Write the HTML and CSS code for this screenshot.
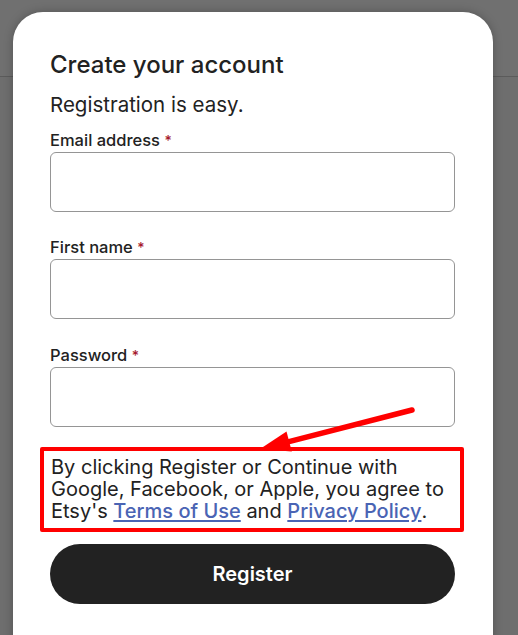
FILE: index.html
```html
<!DOCTYPE html>
<html lang="en">
<head>
<meta charset="utf-8">
<title>Create your account</title>
<link rel="stylesheet" href="styles.css">
</head>
<body>
<header class="site-header"></header>
<div class="modal">
  <h1 class="title">Create your account</h1>
  <p class="subtitle">Registration is easy.</p>
  <form class="form">
    <div class="group">
      <label class="label">Email address <span class="req">*</span></label>
      <input class="input" type="email">
    </div>
    <div class="group">
      <label class="label">First name <span class="req">*</span></label>
      <input class="input" type="text">
    </div>
    <div class="group">
      <label class="label">Password <span class="req">*</span></label>
      <input class="input" type="password">
    </div>
    <p class="legal">By clicking Register or Continue with Google, Facebook, or Apple, you agree to Etsy's <a href="#" class="link">Terms of Use</a> and <a href="#" class="link">Privacy Policy</a>.</p>
    <button type="button" class="btn">Register</button>
  </form>
</div>
<svg class="arrow" width="170" height="56" viewBox="0 0 170 56">
  <line x1="162" y1="10" x2="38" y2="41.8" stroke="#f00" stroke-width="5.5" stroke-linecap="round"/>
  <polygon points="10,49 36.5,31.5 41.8,51.5" fill="#f00"/>
</svg>
</body>
</html>
```
FILE: styles.css
```css
html, body {
  margin: 0;
  padding: 0;
}
body {
  background: #6e6e6e;
  height: 635px;
  overflow: hidden;
  position: relative;
  font-family: "Inter", "Liberation Sans", sans-serif;
  color: #222;
}
.site-header {
  height: 76px;
  border-bottom: 1px solid #5b5b5b;
  background: #707070;
}
.modal {
  position: absolute;
  left: 13px;
  top: 12px;
  width: 480px;
  height: 660px;
  background: #fff;
  border-radius: 30px;
  box-shadow: 0 0 10px rgba(0,0,0,0.25);
  box-sizing: border-box;
  padding: 39px 38px 0 37px;
}
.title {
  margin: 0;
  font-size: 24px;
  line-height: 28px;
  font-weight: 500;
  color: #222;
}
.subtitle {
  margin: 13px 0 0;
  font-size: 20.5px;
  line-height: 26px;
  font-weight: 400;
}
.form {
  margin-top: 11.5px;
  display: flex;
  flex-direction: column;
}
.group {
  display: flex;
  flex-direction: column;
  margin-bottom: 25.5px;
}
.group:nth-child(3) {
  margin-bottom: 20.5px;
}
.label {
  font-size: 16.5px;
  line-height: 20px;
  font-weight: 500;
  margin-bottom: 1px;
}
.req {
  color: #a61a2e;
  font-size: 14px;
}
.input {
  height: 60px;
  box-sizing: border-box;
  border: 1px solid #959595;
  border-radius: 6px;
  background: #fff;
  margin: 0;
}
.legal {
  margin: 0 -9px 0 -10px;
  border: 4px solid #f00;
  border-radius: 2px;
  padding: 4.7px 4px 6.3px 7px;
  font-size: 20px;
  line-height: 22px;
  font-weight: 400;
}
.link {
  color: #4a64b4;
  font-weight: 500;
  text-decoration: underline;
  text-decoration-thickness: 1.5px;
  text-underline-offset: 2px;
}
.btn {
  margin-top: 12px;
  height: 60px;
  border: 0;
  border-radius: 30px;
  background: #222;
  color: #fff;
  font-family: "Inter", "Liberation Sans", sans-serif;
  font-size: 20px;
  font-weight: 600;
}
.arrow {
  position: absolute;
  left: 250px;
  top: 400px;
}
```
